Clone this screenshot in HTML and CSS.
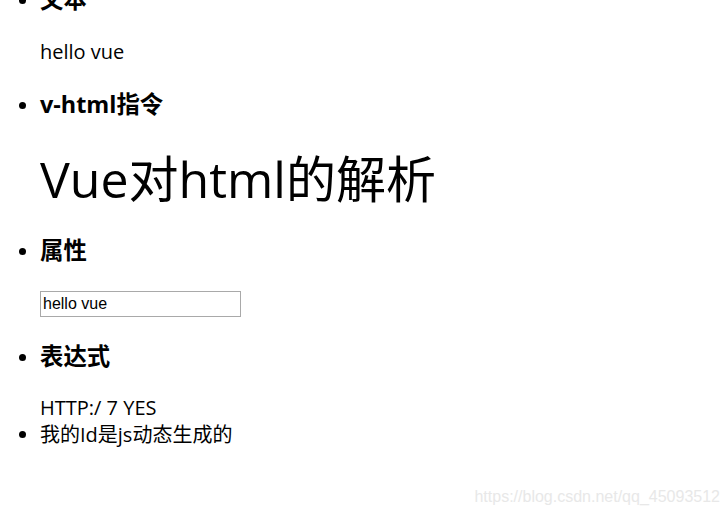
FILE: index.html
```html
<!DOCTYPE html>
<html lang="zh-CN">
<head>
    <meta charset="UTF-8">
    <title>Vue 指令</title>
    <link rel="stylesheet" href="styles.css">
</head>
<body>
    <div id="app">
        <ul class="demo-list">
            <li>
                <h3>文本</h3>
                <p>hello vue</p>
            </li>
            <li>
                <h3>v-html指令</h3>
                <div class="html-out">Vue对html的解析</div>
            </li>
            <li>
                <h3>属性</h3>
                <input class="attr-input" type="text" value="hello vue">
            </li>
            <li>
                <h3>表达式</h3>
                <div>HTTP:/ 7 YES</div>
            </li>
            <li id="dynamic">我的Id是js动态生成的</li>
        </ul>
    </div>
    <div class="watermark">https://blog.csdn.net/qq_45093512</div>
</body>
</html>
```

FILE: styles.css
```css
body {
    margin: 0;
    font-family: "Open Sans", "Noto Sans CJK SC", sans-serif;
    font-size: 20px;
    line-height: 26.4px;
    color: #000;
    background: #fff;
}

.demo-list {
    margin: -39px 0 0 0;
    padding-left: 40px;
}

.demo-list h3 {
    font-size: 23.4px;
    line-height: 31px;
    margin: 23.4px 0;
}

.demo-list p {
    margin: 20px 0;
}

.html-out {
    padding-top: 3px;
    font-size: 50px;
    line-height: 66px;
}

.attr-input {
    width: 201px;
    height: 26px;
    box-sizing: border-box;
    margin: 0;
    padding: 1px 2px;
    border: 1px solid #a9a9a9;
    font-family: "Liberation Sans", Arial, sans-serif;
    font-size: 16px;
    vertical-align: middle;
}

.watermark {
    position: absolute;
    right: 8px;
    bottom: 8px;
    font-family: "Liberation Sans", Arial, sans-serif;
    font-size: 16px;
    color: #e8e8e8;
}
```
